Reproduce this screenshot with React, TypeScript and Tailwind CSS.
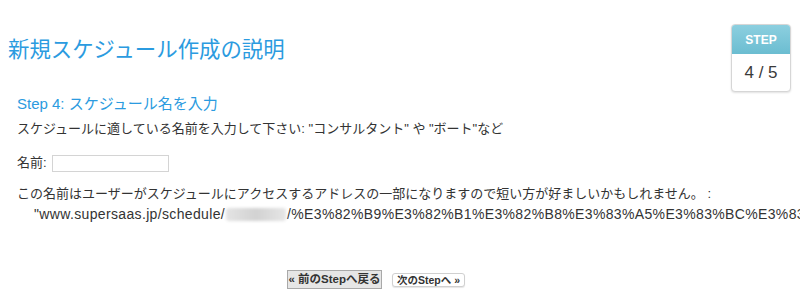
import React from "react";

const FONT = {
  fontFamily:
    '"Liberation Sans", "Noto Sans CJK JP", Arial, sans-serif',
};

function StepBadge() {
  return (
    <div className="mt-[24px] mr-[9px] flex h-[68px] w-[60px] flex-col overflow-hidden rounded-[4px] border border-[#d6d6d6] bg-white shadow-[0_1px_2px_rgba(0,0,0,0.12)]">
      <div className="flex h-[29px] items-center justify-center bg-gradient-to-b from-[#8ccfdf] to-[#6bbdd1] text-[12px] font-bold text-white">
        STEP
      </div>
      <div className="flex flex-1 items-center justify-center text-[17px] font-medium text-[#3a3a3a]">
        4 / 5
      </div>
    </div>
  );
}

export default function App() {
  return (
    <div
      className="h-[308px] w-[800px] overflow-hidden bg-white text-[#333]"
      style={FONT}
    >
      <div className="flex items-start justify-between">
        <h1 className="mt-[38px] ml-[8px] text-[21.4px] leading-[25px] text-[#2b9be0]">
          新規スケジュール作成の説明
        </h1>
        <StepBadge />
      </div>

      <h2 className="mt-[2px] ml-[17px] text-[15px] leading-[20px] text-[#2b9be0]">
        Step 4: スケジュール名を入力
      </h2>
      <p className="mt-[6px] ml-[17px] text-[13px] leading-[18px]">
        スケジュールに適している名前を入力して下さい: "コンサルタント" や "ボート"など
      </p>

      <div className="mt-[16px] ml-[17px] flex items-center gap-[5px] text-[13px] leading-[18px]">
        <span>名前:</span>
        <input
          type="text"
          className="h-[17px] w-[117px] border border-[#d4d4d4] bg-white outline-none"
        />
      </div>

      <div className="mt-[12px] ml-[17px] text-[13px] leading-[20px]">
        <p className="whitespace-nowrap">
          この名前はユーザーがスケジュールにアクセスするアドレスの一部になりますので短い方が好ましいかもしれません。 :
        </p>
        <p className="ml-[17px] flex items-center whitespace-nowrap text-[14px] tracking-[0.35px]">
          <span className="shrink-0">"www.supersaas.jp/schedule/</span>
          <span className="mx-[1px] inline-block h-[13px] w-[60px] shrink-0 rounded-[3px] bg-gradient-to-r from-[#e4e4e4] via-[#d2d2d2] to-[#e6e6e6] blur-[1.5px]" />
          <span className="shrink-0">/%E3%82%B9%E3%82%B1%E3%82%B8%E3%83%A5%E3%83%BC%E3%83%AB"</span>
        </p>
      </div>

      <div className="mt-[46px] flex items-center gap-[10px] pl-[287px]">
        <button className="h-[19px] w-[95px] border border-[#a9a9a9] bg-[#e6e6e6] text-[11.5px] font-semibold leading-[17px] text-[#333]">
          « 前のStepへ戻る
        </button>
        <button className="h-[14px] w-[73px] rounded-[3px] border border-[#d0d0d0] bg-white text-[10.5px] font-semibold leading-[12px] text-[#333] shadow-[0_1px_1px_rgba(0,0,0,0.1)]">
          次のStepへ »
        </button>
      </div>
    </div>
  );
}
